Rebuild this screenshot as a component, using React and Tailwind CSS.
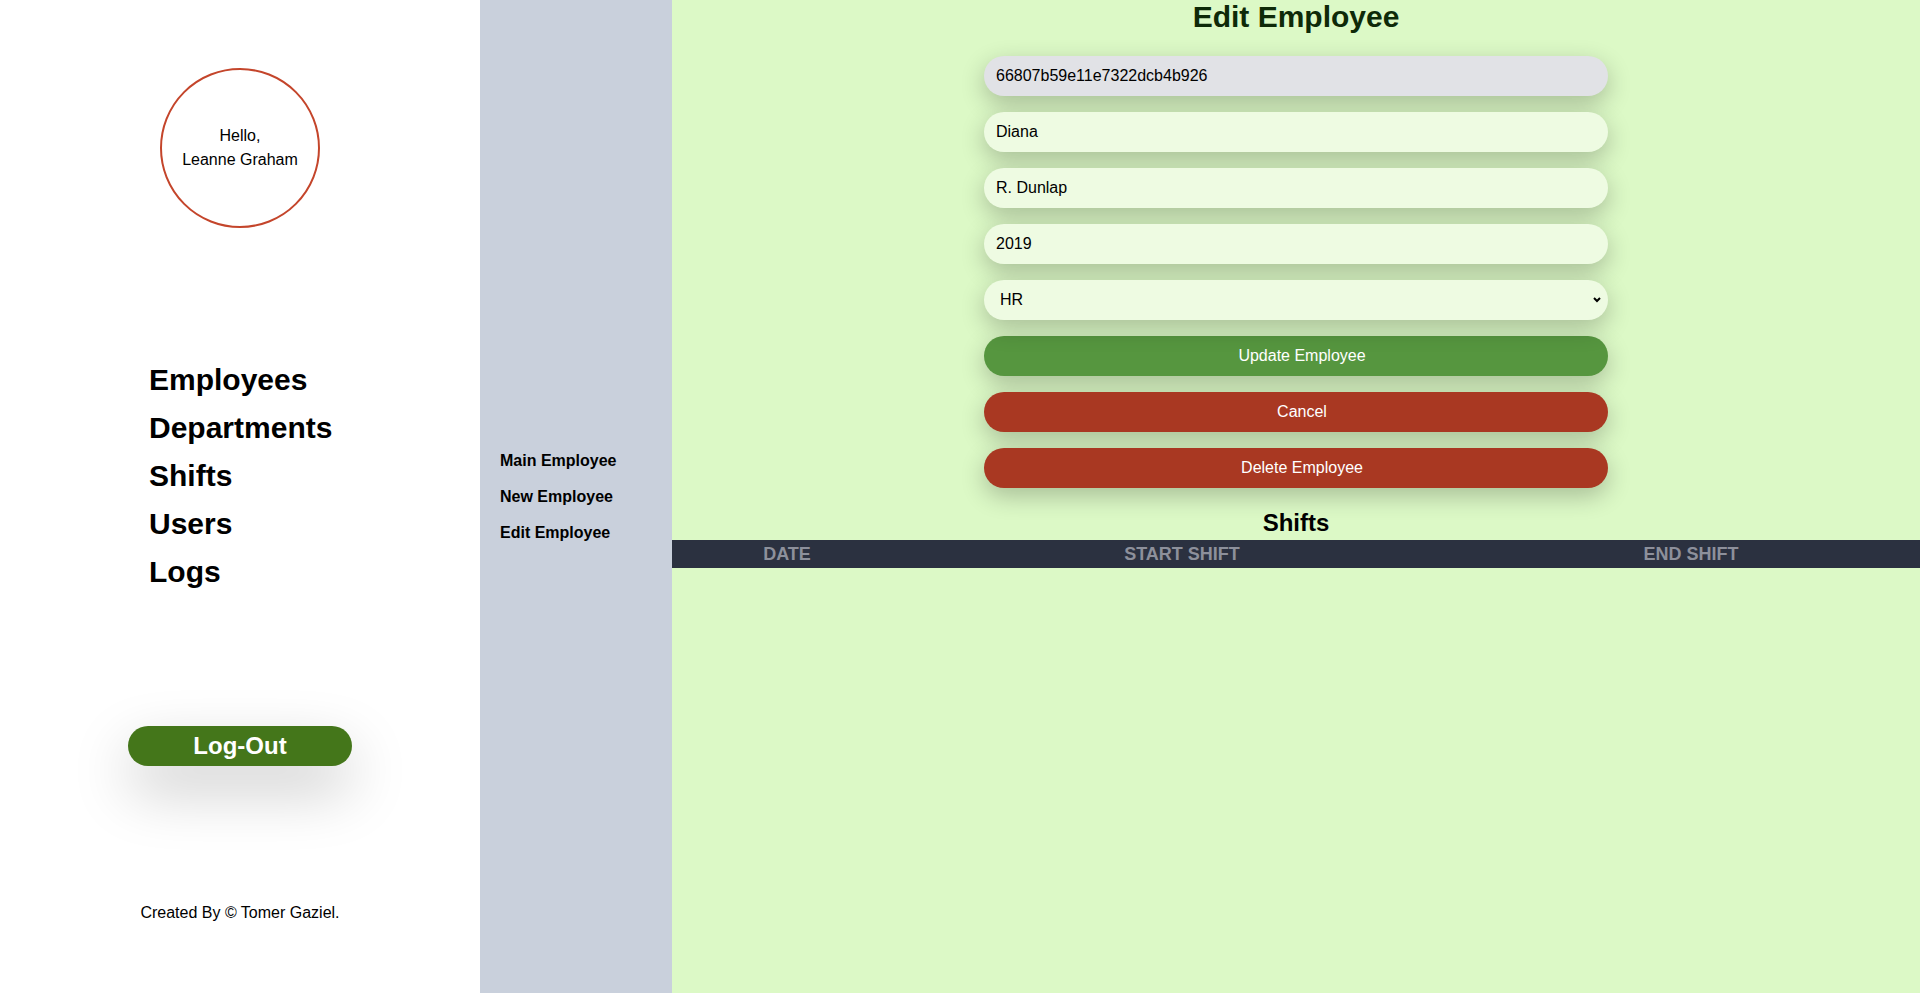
import React, { useState } from 'react';

const navLinks = ['Employees', 'Departments', 'Shifts', 'Users', 'Logs'];
const subLinks = ['Main Employee', 'New Employee', 'Edit Employee'];

const Sidebar = () => (
  <aside className="w-[480px] shrink-0 bg-white flex flex-col items-center">
    <div className="mt-[68px] w-[160px] h-[160px] rounded-full border-2 border-[#c4452b] flex flex-col items-center justify-center text-[16px] leading-[24px] text-black">
      <span>Hello,</span>
      <span>Leanne Graham</span>
    </div>

    <nav className="mt-[128px] w-full pl-[149px] flex flex-col">
      {navLinks.map((link) => (
        <a key={link} href="#" className="text-[30px] leading-[48px] font-bold text-black">
          {link}
        </a>
      ))}
    </nav>

    <button className="mt-[130px] w-[224px] h-[40px] rounded-full bg-[#44761a] text-white text-[24px] font-bold shadow-[0_24px_60px_rgba(0,0,0,0.22)]">
      Log-Out
    </button>

    <p className="mt-[135px] text-[16px] text-black">Created By © Tomer Gaziel.</p>
  </aside>
);

const SubNav = () => (
  <div className="w-[192px] shrink-0 bg-[#c9d0dc] flex flex-col justify-center pl-[20px]">
    {subLinks.map((link) => (
      <a key={link} href="#" className="text-[16px] leading-[36px] font-bold text-black">
        {link}
      </a>
    ))}
  </div>
);

const inputClass =
  'w-full h-[40px] rounded-full text-[16px] text-black outline-none shadow-[0_8px_24px_rgba(0,0,0,0.24)]';

const EditEmployee = () => {
  const [form, setForm] = useState({ first: 'Diana', last: 'R. Dunlap', year: '2019', dept: 'HR' });

  return (
    <main className="flex-1 bg-[#dcf9c6] flex flex-col items-center">
      <h1 className="h-[36px] text-[30px] leading-[34px] font-bold text-[#0e2a08]">Edit Employee</h1>

      <form className="mt-[20px] w-[624px] flex flex-col gap-[16px]" onSubmit={(e) => e.preventDefault()}>
        <input className={`${inputClass} px-[12px] bg-[#e1e2e6]`} value="66807b59e11e7322dcb4b926" disabled readOnly />
        <input
          className={`${inputClass} px-[12px] bg-[#eefbe2]`}
          value={form.first}
          onChange={(e) => setForm({ ...form, first: e.target.value })}
        />
        <input
          className={`${inputClass} px-[12px] bg-[#eefbe2]`}
          value={form.last}
          onChange={(e) => setForm({ ...form, last: e.target.value })}
        />
        <input
          className={`${inputClass} px-[12px] bg-[#eefbe2]`}
          value={form.year}
          onChange={(e) => setForm({ ...form, year: e.target.value })}
        />
        <div className="relative">
          <select
            className={`${inputClass} bg-[#eefbe2] appearance-none pl-[16px] pr-[12px]`}
            value={form.dept}
            onChange={(e) => setForm({ ...form, dept: e.target.value })}
          >
            <option value="HR">HR</option>
            <option value="IT">IT</option>
            <option value="Sales">Sales</option>
          </select>
          <svg className="absolute right-[6px] top-[16px] w-[10px] h-[8px] pointer-events-none" viewBox="0 0 10 8" fill="none" stroke="black" strokeWidth="2">
            <path d="M2 2l3 3 3-3" />
          </svg>
        </div>
        <button type="submit" className={`${inputClass} pl-[12px] bg-[#56963f] text-white`}>Update Employee</button>
        <button type="button" className={`${inputClass} pl-[12px] bg-[#a93822] text-white`}>Cancel</button>
        <button type="button" className={`${inputClass} pl-[12px] bg-[#a93822] text-white`}>Delete Employee</button>
      </form>

      <h2 className="mt-[21px] text-[24px] leading-[28px] font-bold text-black">Shifts</h2>

      <div className="mt-[3px] w-full h-[28px] bg-[#2b3140] grid grid-cols-[230px_560px_1fr] items-center text-[18px] font-bold uppercase text-[#8d909b]">
        <span className="text-center">Date</span>
        <span className="text-center">Start Shift</span>
        <span className="text-center">End Shift</span>
      </div>
    </main>
  );
};

const App = () => (
  <div className="flex min-h-[993px] w-full font-['Liberation_Sans',Arial,sans-serif]">
    <Sidebar />
    <SubNav />
    <EditEmployee />
  </div>
);

export default App;
